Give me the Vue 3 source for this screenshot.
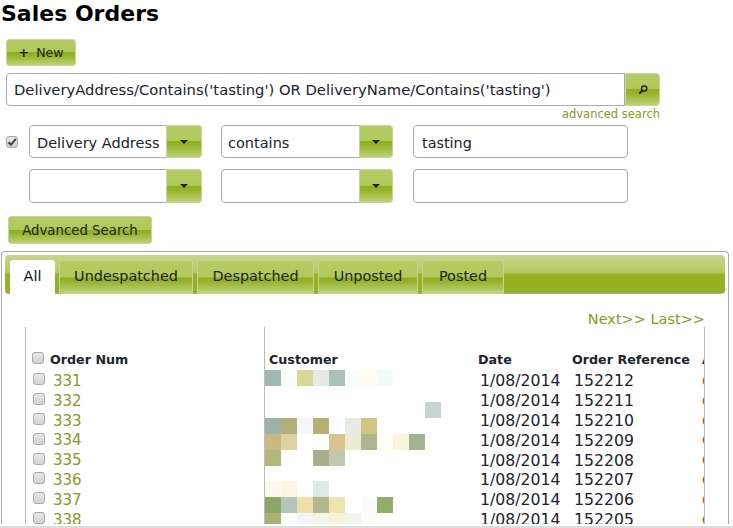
<script setup>
const cell = 16
const mosaic = [
  [0, ['#a0b8b4', '#fbfdfb', '#d6d996', '#e4e9e2', '#abc0b7', '#fbfdfc', '#fffcf6', '#f4f9fc']],
  [48, ['#9fb2a8', '#b3b17b', '#f3f8fb', '#b5b074', '#fcfdff', '#e6eae2', '#d0c581']],
  [64, ['#c9ba83', '#ddd0a2', null, null, '#d9c490', '#e9ebd3', '#aeb490', '#fefefb', '#f8f7da', '#a6b092']],
  [80, ['#b0b87e', null, null, '#a9af8b', '#c1c7ae']],
  [111, ['#fff8f0', '#fdf4e4', null, '#e0e8e6']],
  [127, ['#8fa56c', '#b3c4b8', '#f0dfa8', '#b0b98a', '#efe3ae', null, '#fafbfd', '#92ac6a']],
  [143, ['#abaf72', '#fbfcfe', '#f2f6f7', '#f4f4e8', '#f7f2da', '#f2f5ee', '#fffcf7']],
]
const blocks = []
mosaic.forEach(([y, colors]) => {
  colors.forEach((fill, i) => {
    if (fill) blocks.push({ x: i * cell, y, fill })
  })
})
blocks.push({ x: 160, y: 32, fill: '#c5d5d4' })

const tabs = [
  { label: 'All', width: 45 },
  { label: 'Undespatched', width: 134 },
  { label: 'Despatched', width: 117 },
  { label: 'Unposted', width: 100 },
  { label: 'Posted', width: 82 },
]
const orders = [
  ['331', '152212'],
  ['332', '152211'],
  ['333', '152210'],
  ['334', '152209'],
  ['335', '152208'],
  ['336', '152207'],
  ['337', '152206'],
  ['338', '152205'],
]
</script>

<template>
  <div class="page">
    <h1 class="title">Sales Orders</h1>

    <button class="btn new-btn"><span class="plus">+</span>New</button>

    <div class="search-row">
      <input class="field search-input" value="DeliveryAddress/Contains('tasting') OR DeliveryName/Contains('tasting')" />
      <button class="btn search-btn" aria-label="Search">
        <svg width="12" height="12" viewBox="0 0 12 12">
          <circle cx="7.2" cy="4.6" r="2.6" fill="none" stroke="#222" stroke-width="1.4" />
          <path d="M5.3 6.6 2.2 9.6" stroke="#222" stroke-width="2" fill="none" />
        </svg>
      </button>
    </div>
    <div class="adv-link">advanced search</div>

    <div class="filter-row first">
      <span class="check checked">
        <svg width="10" height="10" viewBox="0 0 10 10">
          <path d="M1.5 5.2 4 7.8 8.8 1.8" fill="none" stroke="#444" stroke-width="2" />
        </svg>
      </span>
      <div class="combo wide">
        <span class="combo-text">Delivery Address</span>
        <span class="btn combo-arrow"><i class="caret"></i></span>
      </div>
      <div class="combo">
        <span class="combo-text narrow">contains</span>
        <span class="btn combo-arrow"><i class="caret"></i></span>
      </div>
      <input class="field value-input" value="tasting" />
    </div>

    <div class="filter-row second">
      <span class="check-space"></span>
      <div class="combo wide">
        <span class="combo-text"></span>
        <span class="btn combo-arrow"><i class="caret"></i></span>
      </div>
      <div class="combo">
        <span class="combo-text"></span>
        <span class="btn combo-arrow"><i class="caret"></i></span>
      </div>
      <input class="field value-input" value="" />
    </div>

    <button class="btn adv-btn">Advanced Search</button>

    <section class="panel">
      <nav class="tabbar">
        <a
          v-for="(tab, i) in tabs"
          :key="tab.label"
          class="tab"
          :class="{ active: i === 0 }"
          :style="{ width: tab.width + 'px' }"
        >{{ tab.label }}</a>
      </nav>

      <div class="pager"><a>Next&gt;&gt;</a> <a>Last&gt;&gt;</a></div>

      <div class="table">
        <div class="row head">
          <div class="c-num"><span class="check"></span><b>Order Num</b></div>
          <div class="c-cust"><b>Customer</b></div>
          <div class="c-date"><b>Date</b></div>
          <div class="c-ref"><b>Order Reference</b></div>
          <div class="c-last"><b>A</b></div>
        </div>
        <div v-for="o in orders" :key="o[0]" class="row">
          <div class="c-num"><span class="check"></span><a class="num">{{ o[0] }}</a></div>
          <div class="c-cust"></div>
          <div class="c-date pad">1/08/2014</div>
          <div class="c-ref pad">{{ o[1] }}</div>
          <div class="c-last brown">C</div>
        </div>

        <svg class="mosaic" width="176" height="160" shape-rendering="crispEdges">
          <rect v-for="(b, i) in blocks" :key="i" :x="b.x" :y="b.y" width="16" height="16" :fill="b.fill" />
        </svg>
      </div>
    </section>
  </div>
</template>

<style scoped>
.page {
  box-sizing: border-box;
  width: 733px;
  height: 528px;
  padding-bottom: 2px;
  overflow: hidden;
  display: flex;
  flex-direction: column;
  align-items: flex-start;
  font-family: "DejaVu Sans", Verdana, sans-serif;
  color: #20222c;
  background: #fff;
  border-bottom: 2px solid #dcdcdc;
}
.title {
  margin: 0 0 0 1px;
  height: 26px;
  line-height: 28px;
  font-size: 22px;
  font-weight: 700;
  color: #000;
}
.btn {
  box-sizing: border-box;
  border: 1px solid #c9d3a6;
  border-radius: 3px;
  padding: 0;
  color: #222;
  font-family: inherit;
  background: linear-gradient(#b5cb63 0%, #b1c95b 48%, #8fae1b 50%, #96b32a 62%, #bdd277 100%);
}
.new-btn {
  margin: 13px 0 0 6px;
  width: 70px;
  height: 27px;
  font-size: 12.6px;
  display: flex;
  align-items: center;
  justify-content: center;
}
.plus {
  font-weight: 700;
  font-size: 13px;
  margin-right: 7px;
}
.search-row {
  margin: 7px 0 0 6px;
  display: flex;
}
.field {
  box-sizing: border-box;
  border: 1px solid #aaa;
  border-radius: 4px;
  background: #fff;
  color: #20222c;
  font-family: inherit;
  font-size: 14.4px;
  outline: none;
}
.search-input {
  width: 619px;
  height: 33px;
  padding: 0 7px;
  font-size: 14.76px;
  border-radius: 4px 0 0 4px;
}
.search-btn {
  width: 35px;
  height: 33px;
  display: flex;
  align-items: center;
  justify-content: center;
  border-radius: 0 4px 4px 0;
}
.adv-link {
  box-sizing: border-box;
  width: 660px;
  height: 19px;
  line-height: 17px;
  text-align: right;
  font-size: 11.5px;
  color: #8c9628;
}
.filter-row {
  display: flex;
  align-items: stretch;
  margin-left: 6px;
}
.first {
  height: 33px;
}
.second {
  height: 34px;
  margin-top: 11px;
}
.check {
  box-sizing: border-box;
  flex: none;
  width: 12px;
  height: 12px;
  display: inline-flex;
  align-items: center;
  justify-content: center;
  border: 1px solid #a8a8a8;
  border-radius: 3px;
  background: linear-gradient(#e8e8e8, #d2d2d2);
}
.checked {
  align-self: center;
}
.check-space {
  flex: none;
  width: 12px;
}
.combo {
  box-sizing: border-box;
  display: flex;
  width: 172px;
  margin-left: 19px;
  border: 1px solid #aaa;
  border-radius: 4px;
  background: #fff;
}
.combo.wide {
  width: 173px;
  margin-left: 11px;
}
.combo-text {
  flex: 1;
  display: flex;
  align-items: center;
  padding: 2px 0 0 7px;
  font-size: 14.5px;
  white-space: nowrap;
}
.combo-text.narrow {
  padding-left: 6px;
}
.combo-arrow {
  flex: none;
  width: 34px;
  margin: -1px;
  display: flex;
  align-items: center;
  justify-content: center;
  border-radius: 0 4px 4px 0;
}
.wide .combo-arrow {
  width: 36px;
}
.caret {
  width: 0;
  height: 0;
  border: 4px solid transparent;
  border-top: 4px solid #222;
  border-bottom: 0;
}
.value-input {
  width: 215px;
  margin-left: 20px;
  padding: 2px 8px 0;
}
.adv-btn {
  margin: 13px 0 0 8px;
  width: 144px;
  height: 28px;
  font-size: 13.3px;
}
.panel {
  box-sizing: border-box;
  flex: 1;
  min-height: 0;
  width: 728px;
  margin: 7px 0 0 1px;
  padding: 3px;
  border: 1px solid #aaa;
  border-bottom: 0;
  border-radius: 4px 4px 0 0;
  overflow: hidden;
}
.tabbar {
  box-sizing: border-box;
  height: 39px;
  padding: 5px 0 0 5px;
  display: flex;
  gap: 4px;
  border-bottom: 1px solid #a8a8a8;
  border-radius: 4px;
  background: linear-gradient(#c6d68a 0%, #b6cb62 45%, #93b120 52%, #93b120 100%);
}
.tab {
  box-sizing: border-box;
  height: 34px;
  line-height: 31px;
  text-align: center;
  font-size: 14.4px;
  color: #222;
  border: 1px solid #c6d39a;
  border-bottom: 0;
  border-radius: 3px 3px 0 0;
  background: linear-gradient(#b5cb63 0%, #b1c95b 48%, #8fae1b 52%, #99b534 66%, #c5d786 100%);
}
.tab.active {
  background: #fff;
  border-color: #fff;
  color: #111;
}
.pager {
  height: 33px;
  padding-right: 20px;
  line-height: 50px;
  text-align: right;
  font-size: 14.5px;
  color: #8c9628;
}
.table {
  position: relative;
  box-sizing: border-box;
  width: 680px;
  flex: none;
  height: 197px;
  margin-left: 20px;
  border-left: 1px solid #bbb;
  border-right: 1px solid #bbb;
  overflow: hidden;
}
.table::before {
  content: "";
  position: absolute;
  left: 238px;
  top: 0;
  bottom: 0;
  width: 1px;
  background: #bbb;
}
.row {
  display: grid;
  grid-template-columns: 239px 213px 94px 130px 2px;
  height: 19.82px;
  align-items: center;
  font-size: 15.7px;
  white-space: nowrap;
}
.row.head {
  height: 44px;
  align-items: end;
  padding-bottom: 4px;
  box-sizing: border-box;
  font-size: 12.7px;
}
.c-num {
  display: flex;
  align-items: center;
  padding-left: 7px;
}
.c-num .check {
  margin-bottom: 3px;
}
.head .c-num {
  padding-left: 6px;
}
.head .c-num .check {
  margin: -4px 0 0;
}
.head .c-num b {
  margin-left: 6px;
}
.head .c-cust {
  padding-left: 4px;
}
.pad {
  padding-left: 2px;
}
.c-last {
  overflow: hidden;
  width: 2px;
}
.brown {
  color: #8a5a2a;
  font-size: 14px;
}
.num {
  margin-left: 8px;
  font-size: 15px;
  color: #8c9628;
}
.mosaic {
  position: absolute;
  left: 239px;
  top: 43px;
}
</style>

<style>
html, body {
  margin: 0;
  background: #fff;
}
</style>
